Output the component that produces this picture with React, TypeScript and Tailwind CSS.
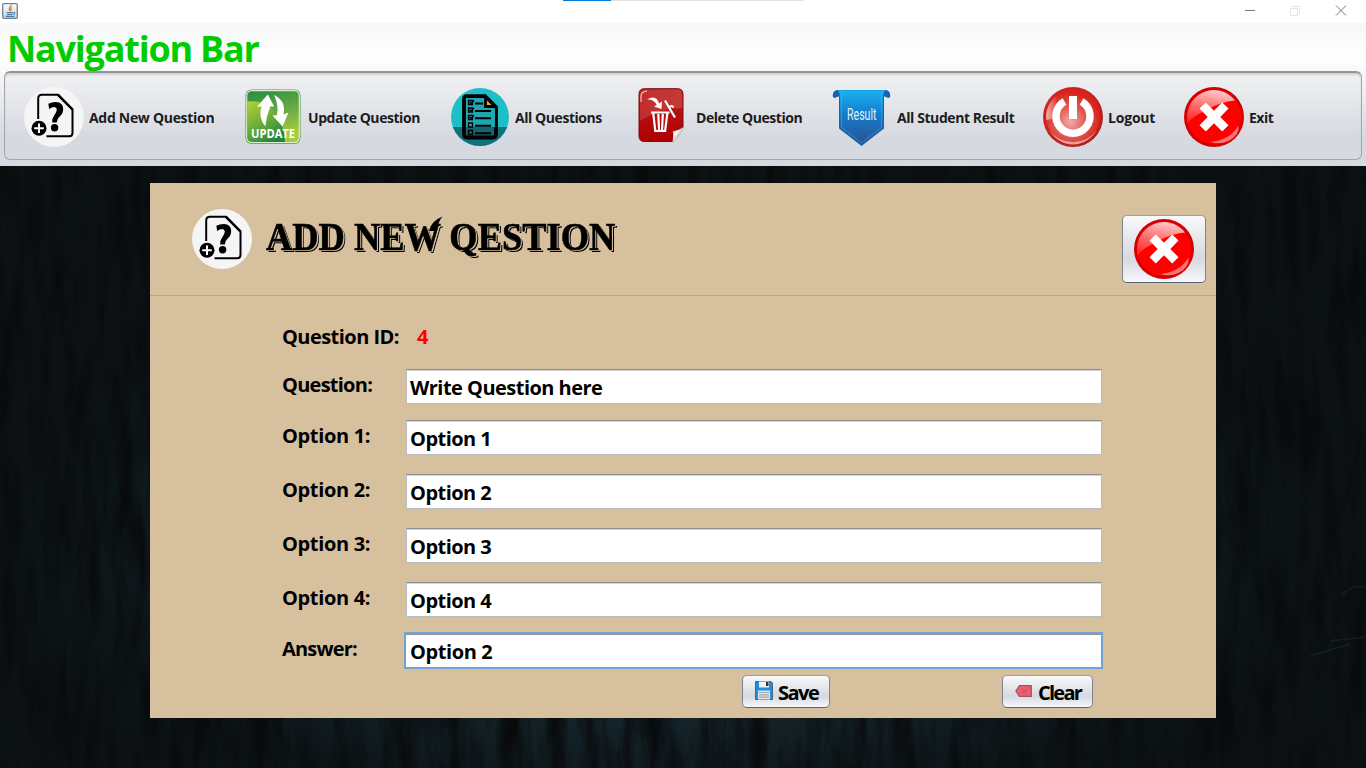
import type { ReactNode } from "react";

const QuestionIcon = () => (
  <svg width="60" height="60" viewBox="0 0 60 60" className="shrink-0">
    <circle cx="30" cy="30" r="30" fill="#f5f5f6" />
    <path d="M14.2 32V11.500q0-3.700 3.700-3.700H34L48.500 22.500V46q0 3.200-3.200 3.200H22.500" fill="none" stroke="#000" strokeWidth="2" strokeLinejoin="round" />
    <path d="M34 7.800L48.500 22.500" stroke="#000" strokeWidth="2.400" />
    <path d="M24.300 16.800Q28 15 31.800 15.100Q39.200 15.600 39.200 22Q39.200 26.600 35.700 29.500Q33 31.700 32.800 35.600H28.200Q27.900 31.500 30.300 28.300Q32.800 25 32.800 22.500Q32.700 20.200 30.200 20.100Q27.800 20.100 25.200 22Z" fill="#000" />
    <circle cx="30.600" cy="40.800" r="3.700" fill="#000" />
    <circle cx="15" cy="41.300" r="7.500" fill="#000" />
    <path d="M15 36.500v9.600M10.200 41.300h9.600" stroke="#fff" strokeWidth="2" />
  </svg>
);

const UpdateIcon = () => (
  <svg width="56" height="56" viewBox="0 0 56 56" className="shrink-0">
    <defs>
      <linearGradient id="upA" x1="0" y1="0" x2="0.300" y2="1">
        <stop offset="0" stopColor="#258a43" />
        <stop offset="0.600" stopColor="#6fae44" />
        <stop offset="1" stopColor="#a9cc3c" />
      </linearGradient>
      <linearGradient id="upB" x1="0" y1="0" x2="0.600" y2="1">
        <stop offset="0" stopColor="#b5d334" />
        <stop offset="0.750" stopColor="#4f9e3f" />
        <stop offset="1" stopColor="#1f8540" />
      </linearGradient>
    </defs>
    <rect x="0.500" y="0.500" width="55" height="54.500" rx="6" fill="#4c9a45" />
    <rect x="1.700" y="1.700" width="52.600" height="52" rx="5" fill="url(#upA)" stroke="#dcebd2" strokeWidth="1.200" />
    <path d="M2.300 12.500Q22 10 33 27Q39 38 40 53.100H7Q2.300 53 2.300 48Z" fill="url(#upB)" />
    <path d="M22.800 5.500L29.200 17.500H25.200Q21.500 27 20.200 37.500Q13 28 16.500 17.500L12 17.800Z" fill="#fff" />
    <path d="M29 6Q41.500 12 38.500 25.500L43.500 23.500L37.500 37.500L27.500 26.500L32 26.300Q34 16 29 6Z" fill="#fff" />
    <text x="6" y="49" textLength="44" lengthAdjust="spacingAndGlyphs" fontFamily="Open Sans" fontWeight="700" fontSize="12.300" fill="#fff">UPDATE</text>
  </svg>
);

const ListIcon = () => (
  <svg width="58" height="58" viewBox="0 0 58 58" className="shrink-0">
    <defs><clipPath id="listClip"><circle cx="29" cy="29" r="29" /></clipPath></defs>
    <g clipPath="url(#listClip)">
      <rect width="58" height="58" fill="#1fbfc8" />
      <rect y="39" width="58" height="19" fill="#12727b" />
    </g>
    <path d="M16 8.200H34L45 19V46.500q0 3-3 3H16q-3 0-3-3V11.200q0-3 3-3Z" fill="#17646f" stroke="#000" strokeWidth="3.800" />
    <path d="M15 10h20l9 9v20H15Z" fill="#1ea7b1" />
    <path d="M34.500 9V18.500H44Z" fill="#d9ae28" stroke="#000" strokeWidth="2.800" />
    <path d="M24 15.500h8M24 23h16M24 30.300h16M24 37.800h16M24 45.300h16" stroke="#000" strokeWidth="1.900" />
    <g fill="none" stroke="#000" strokeWidth="1.300">
      <path d="M17.500 12.500h4v4h-4ZM17.500 20h4v4h-4ZM17.500 27.500h4v4h-4ZM17.500 35h4v4h-4ZM17.500 42.500h4v4h-4Z" />
      <path d="M18.500 14l1.500 1.500l3-3M18.500 21.500l1.500 1.500l3-3M18.500 29l1.500 1.500l3-3" />
    </g>
  </svg>
);

const DeleteIcon = () => (
  <svg width="46" height="55" viewBox="0 0 46 55" className="mb-1 shrink-0">
    <defs>
      <linearGradient id="delA" x1="0" y1="0" x2="0" y2="1">
        <stop offset="0" stopColor="#b81d1d" /><stop offset="1" stopColor="#ae0000" />
      </linearGradient>
      <linearGradient id="delB" x1="0" y1="0" x2="1" y2="0.500">
        <stop offset="0" stopColor="#c63a3a" /><stop offset="1" stopColor="#cf5252" />
      </linearGradient>
      <linearGradient id="delC" x1="0" y1="0" x2="1" y2="1">
        <stop offset="0.100" stopColor="#888" /><stop offset="0.350" stopColor="#fff" /><stop offset="0.550" stopColor="#c4c4c4" />
      </linearGradient>
    </defs>
    <path d="M6.500 0.700H39.500q5.500 0 5.500 5.500V40L35 53.500H6.500q-5.500 0-5.500-5.500V6.200Q1 0.700 6.500 0.700Z" fill="url(#delA)" stroke="#7c0a0c" />
    <path d="M8 1.500H39.500q4.700 0 4.700 4.700V20Q22 20 2 33V8Q2 1.500 8 1.500Z" fill="url(#delB)" opacity="0.600" />
    <path d="M3 14V8q0-4.500 6-4.800" fill="none" stroke="#efb5b5" strokeWidth="1.300" />
    <path d="M34.500 54Q36 48 34.800 43Q40 43 45.500 39Q44.500 48 34.500 54Z" fill="url(#delC)" />
    <path d="M9 11.500Q18.500 6 21 15.500L24 13.500L23.500 21L16 18.500L18.800 17Q16 11 9 11.500Z" fill="#fff" />
    <path d="M27 12.500L37 29.500M31.500 19.500q2-3 4 0" stroke="#fff" strokeWidth="2.200" fill="none" />
    <path d="M13 24.500h18.500M15.300 25.500l2 17.500h9.800l2.200-17.500M20.300 26l.8 17M24.800 26l-.8 17" fill="none" stroke="#fff" strokeWidth="2.200" />
  </svg>
);

const ResultIcon = () => (
  <svg width="60" height="58" viewBox="0 0 60 58" className="shrink-0 overflow-visible">
    <defs>
      <linearGradient id="resA" x1="0" y1="0" x2="0" y2="1">
        <stop offset="0" stopColor="#19b0f3" /><stop offset="0.450" stopColor="#147cc9" /><stop offset="1" stopColor="#2c4f94" />
      </linearGradient>
    </defs>
    <g transform="translate(0 1)">
      <path d="M1 5Q1.500 0.500 8 1V7L2.500 9Q0 8 1 5ZM58 5Q57.500 0.500 51 1V7L56.500 9Q59 8 58 5Z" fill="#0e64b5" />
      <path d="M4 1H55L52 5.500V39.500L29.500 57L7 39.500V5.500Z" fill="#1366ad" />
      <path d="M5 1.200H54Q51 3 51 8V39L29.500 55.500L8 39V8Q8 3 5 1.200Z" fill="url(#resA)" />
      <path d="M9.500 2V38.200L29.500 54L49.500 38.200V2" fill="none" stroke="#65b6ec" strokeWidth="0.700" strokeDasharray="1.500 1" />
      <text x="15" y="31" textLength="29.500" lengthAdjust="spacingAndGlyphs" fontFamily="Roboto" fontWeight="400" fontSize="17" fill="#def4ff">Result</text>
    </g>
  </svg>
);

const LogoutIcon = () => (
  <svg width="60" height="60" viewBox="0 0 60 60" className="shrink-0">
    <defs>
      <radialGradient id="outA" cx="0.450" cy="0.600" r="0.550">
        <stop offset="0" stopColor="#f0aaa7" /><stop offset="0.500" stopColor="#e25a55" /><stop offset="1" stopColor="#d9221b" />
      </radialGradient>
      <linearGradient id="outB" x1="0" y1="0" x2="1" y2="1">
        <stop offset="0" stopColor="#d8251d" /><stop offset="1" stopColor="#a9211d" />
      </linearGradient>
      <linearGradient id="outC" x1="0" y1="0" x2="1" y2="0">
        <stop offset="0" stopColor="#fff" stopOpacity="0.650" /><stop offset="0.500" stopColor="#fff" stopOpacity="0" />
      </linearGradient>
    </defs>
    <circle cx="30" cy="30" r="30" fill="url(#outB)" />
    <circle cx="30" cy="29.500" r="27.200" fill="url(#outA)" />
    <path d="M4 23Q9 7 25 3.500Q16 15 16 30Q9 32 3.500 33Q2.500 28 4 23Z" fill="url(#outC)" />
    <path d="M6 43Q15 57 30 57.500Q45 57 54 43Q45 55 30 55.200Q15 55 6 43Z" fill="#efa19e" />
    <path d="M21.500 14.500A17 17 0 1 0 38.500 14.500" fill="none" stroke="#fff" strokeWidth="7.500" />
    <rect x="26" y="9" width="8" height="23" fill="#fff" />
  </svg>
);

const CrossIcon = ({ id }: { id: string }) => (
  <svg width="60" height="60" viewBox="0 0 60 60" className="shrink-0">
    <defs>
      <linearGradient id={id} x1="0.600" y1="0" x2="0.350" y2="1">
        <stop offset="0" stopColor="#ffcaca" /><stop offset="0.500" stopColor="#ff7070" /><stop offset="1" stopColor="#ff2a2a" />
      </linearGradient>
    </defs>
    <circle cx="30" cy="30" r="30" fill="#d60000" />
    <circle cx="30" cy="30" r="27" fill="#fe0000" />
    <path d="M3.500 36Q1 18 14.500 8Q27 0 40 5Q47 8 51 13.500Q37 15 25.500 21.500Q9 29 3.500 36Z" fill={`url(#${id})`} />
    <path d="M26.500 55Q46 53 54.500 38.500Q56 48 44.500 54Q36 58 26.500 55Z" fill="#ff7272" />
    <path d="M15.500 21.500L21.800 15.500L30 23.700L38.200 15.500L44.500 21.500L36.300 29.900L44.500 38.200L38.200 44.500L30 36.300L21.800 44.500L15.500 38.200L23.700 29.900Z" fill="#fff" />
  </svg>
);

const JavaIcon = () => (
  <svg width="16" height="16" viewBox="0 0 16 16" className="-mt-px">
    <defs><linearGradient id="javaBg" x1="0" y1="0" x2="0" y2="1"><stop offset="0" stopColor="#fff" /><stop offset="1" stopColor="#c3d3dc" /></linearGradient></defs>
    <rect x="0.700" y="0.700" width="14.600" height="14.600" rx="1" fill="url(#javaBg)" stroke="#6d8596" strokeWidth="1.300" />
    <path d="M9.800 2Q6 4.800 8 8M10 4.500Q7.800 6 9.300 8" fill="none" stroke="#e8832a" strokeWidth="1.400" />
    <path d="M4.500 9.500h6.500M5 11.300h5.500M3.800 13.300h8.500M11.500 9.300q2.500.3 0 2.200" fill="none" stroke="#4a7bab" strokeWidth="1.200" />
  </svg>
);

const SaveIcon = () => (
  <svg width="18" height="19" viewBox="0 0 18 19" className="mb-[3px] shrink-0">
    <path d="M0.500 0.500H16L17.500 2V18.500H0.500Z" fill="#1b92e6" stroke="#4a6478" />
    <path d="M4 0.500h10v6H4Z" fill="#f2f2f2" />
    <path d="M11 1h2.500v4H11Z" fill="#2c3438" />
    <path d="M3 9.500h12v9H3Z" fill="#e3e1df" />
    <path d="M4 11.500h10M4 13.800h10M4 16.200h10" stroke="#aaa" strokeWidth="1.200" />
  </svg>
);

const ClearIcon = () => (
  <svg width="17" height="12" viewBox="0 0 17 12" className="mb-[2px] shrink-0">
    <path d="M4.500 0.700H16.300V11.300H4.500L0.800 6Z" fill="#f45b6c" stroke="#9c5761" strokeWidth="1.200" strokeLinejoin="round" />
    <path d="M7 3.500L12 8.700M12 3.500L7 8.700" stroke="#a36068" strokeWidth="1" />
  </svg>
);

const Backdrop = () => (
  <svg width="1366" height="602" viewBox="0 0 1366 602" className="absolute inset-0">
    <defs>
      <radialGradient id="glow" cx="0.480" cy="0.650" r="0.500">
        <stop offset="0" stopColor="#1a303b" /><stop offset="0.500" stopColor="#15252c" /><stop offset="0.850" stopColor="#0d1518" /><stop offset="1" stopColor="#0c1214" />
      </radialGradient>
      <filter id="grain" x="0" y="0" width="100%" height="100%" colorInterpolationFilters="sRGB">
        <feTurbulence type="fractalNoise" baseFrequency="0.060 0.010" numOctaves="4" seed="7" />
        <feColorMatrix values="0 0 0 0 0.030  0 0 0 0 0.040  0 0 0 0 0.045  2.200 0 0 0 -0.750" />
      </filter>
    </defs>
    <rect width="1366" height="602" fill="url(#glow)" />
    <rect width="1366" height="602" filter="url(#grain)" />
    <g fill="none">
      <path d="M1362 264L1349 325L1329 375L1317 440Q1318 460 1331 474" stroke="#070b0c" strokeWidth="3" opacity="0.600" />
      <path d="M1341 430Q1350 418 1366 421M1330 475L1366 471M1310 490L1350 478" stroke="#1a2a2e" strokeWidth="1.500" opacity="0.600" />
    </g>
  </svg>
);

const navItems: { label: string; icon: ReactNode; slot: string; text: string }[] = [
  { label: "Add New Question", icon: <QuestionIcon />, slot: "w-[221px] gap-[5px]", text: "tracking-[-0.3px]" },
  { label: "Update Question", icon: <UpdateIcon />, slot: "w-[206px] gap-[7px]", text: "tracking-[-0.44px]" },
  { label: "All Questions", icon: <ListIcon />, slot: "w-[187px] gap-[6px]", text: "tracking-[-0.44px]" },
  { label: "Delete Question", icon: <DeleteIcon />, slot: "w-[194px] gap-[12px]", text: "tracking-[-0.45px]" },
  { label: "All Student Result", icon: <ResultIcon />, slot: "w-[211px] gap-[5px]", text: "tracking-[-0.42px]" },
  { label: "Logout", icon: <LogoutIcon />, slot: "w-[141px] gap-[5px]", text: "tracking-[-0.2px]" },
  { label: "Exit", icon: <CrossIcon id="exitGloss" />, slot: "w-[120px] gap-[5px]", text: "tracking-[-0.5px]" },
];

const rows = [
  { label: "Question:", value: "Write Question here", gap: "mb-4", text: "tracking-[-0.75px]" },
  { label: "Option 1:", value: "Option 1", gap: "mb-[19px]", text: "tracking-[-0.35px]" },
  { label: "Option 2:", value: "Option 2", gap: "mb-[19px]", text: "tracking-[-0.35px]" },
  { label: "Option 3:", value: "Option 3", gap: "mb-[19px]", text: "tracking-[-0.35px]" },
  { label: "Option 4:", value: "Option 4", gap: "mb-[15px]", text: "tracking-[-0.35px]" },
];

const field = "flex h-[35px] w-[696px] items-center border border-[#b9bcc1] border-t-[#8e8e90] bg-white px-[3px] pt-[3px] shadow-[inset_0_1px_#d4d5d8]";
const button = "flex items-center rounded-[5px] border border-[#7e838d] border-t-[#9a9ea6] border-b-[#5b6271] bg-linear-to-b from-[#f8f9fa] via-[#d6d9df] via-65% to-[#f6f8fe]";

export default function App() {
  return (
    <div className="flex h-[768px] w-[1366px] flex-col overflow-hidden bg-[#0c1215] font-['Open_Sans','Noto_Sans',sans-serif] font-bold text-black">
      <header className="relative flex h-[23px] shrink-0 items-center justify-between bg-white pl-0.5">
        <JavaIcon />
        <div className="absolute left-[563px] top-0 flex h-px w-[241px] bg-[#e2e2e2]"><span className="w-12 bg-[#0078d7]" /></div>
        <svg width="122" height="20" viewBox="-10 0 122 20" fill="none">
          <path d="M-9 8.500h10" stroke="#777" />
          <path d="M36.500 6.500h7v7h-7ZM38.500 6v-1.500h7v7H44" stroke="#e3e3e3" />
          <path d="M82 3.500l10 10M92 3.500l-10 10" stroke="#777" />
        </svg>
      </header>

      <nav className="flex h-[143px] shrink-0 flex-col bg-linear-to-b from-[#f6f8f8] via-[#fefefe] via-25% to-[#d6d9e0] to-80% px-1 pb-[6px]">
        <h1 className="h-12 pl-[3px] text-[36px] leading-[52px] tracking-[-1.22px] text-[#00cc00]">Navigation Bar</h1>
        <div className="flex h-[89px] items-center rounded-md border border-[#a6a7ab] border-t-2 border-t-[#949597] bg-linear-to-b from-[#f1f2f3] to-[#d6d9e0] to-75% pl-[19px] pt-[2px] shadow-[inset_0_2px_2px_#cfd0d2]">
          {navItems.map((n) => (
            <div key={n.label} className={`flex shrink-0 items-center ${n.slot}`}>
              {n.icon}
              <span className={`whitespace-nowrap pt-[2px] text-sm text-[#1c1c1e] ${n.text}`}>{n.label}</span>
            </div>
          ))}
        </div>
      </nav>

      <main className="relative flex flex-1 justify-center pt-[17px]">
        <Backdrop />
        <section className="relative flex h-[535px] w-[1066px] flex-col bg-[#d7c09e]">
          <div className="flex h-[113px] items-start border-b border-[#aea8a0] pl-[42px] pr-2.5 pt-[26px]">
            <QuestionIcon />
            <div className="relative ml-3.5 w-[350px]">
              <h2 className="origin-left scale-x-[0.91] whitespace-nowrap font-['Liberation_Serif',serif] text-[40px] leading-[56px] [-webkit-text-stroke:0.6px_#000] [text-shadow:1.5px_0.5px_#d7c09e,2.5px_1.5px_#000]">ADD NEW QESTION</h2>
              <svg width="14" height="16" viewBox="0 0 14 16" className="absolute left-[163px] top-[7px]">
                <path d="M0 15Q2 5 13.500 0.500Q9 5 8 15Z" fill="#000" />
              </svg>
            </div>
            <button className={`${button} ml-auto mt-[6px] h-[68px] w-[84px] justify-center`}><CrossIcon id="closeGloss" /></button>
          </div>
          <form className="flex flex-col pl-[132px] pt-[27px] text-xl leading-7">
            <div className="mb-[18px] flex h-7"><span className="w-[135px] tracking-[-0.55px]">Question ID:</span><span className="text-[#ff0000]">4</span></div>
            {rows.map((r) => (
              <div key={r.label} className={`flex h-[35px] ${r.gap}`}>
                <div className={`w-[124px] pt-[2px] ${r.text}`}>{r.label}</div>
                <div className={field}><span className="tracking-[-0.53px]">{r.value}</span></div>
              </div>
            ))}
            <div className="flex h-[37px]">
              <div className="w-[122px] pt-[3px] tracking-[-0.8px]">Answer:</div>
              <div className="flex w-[699px] items-center border-2 border-[#73a4d1] bg-white px-1 pt-[3px] shadow-[inset_0_1px_#929292]"><span className="tracking-[-0.4px]">Option 2</span></div>
            </div>
            <div className="mt-[6px] flex pl-[460px]">
              <button type="button" className={`${button} h-[33px] w-[88px] gap-[5px] pl-3`}><SaveIcon /><span className="pt-[2px] tracking-[-1.5px]">Save</span></button>
              <button type="button" className={`${button} ml-[172px] h-[33px] w-[91px] gap-1.5 pl-3`}><ClearIcon /><span className="pt-[2px] tracking-[-1.75px]">Clear</span></button>
            </div>
          </form>
        </section>
      </main>
    </div>
  );
}
